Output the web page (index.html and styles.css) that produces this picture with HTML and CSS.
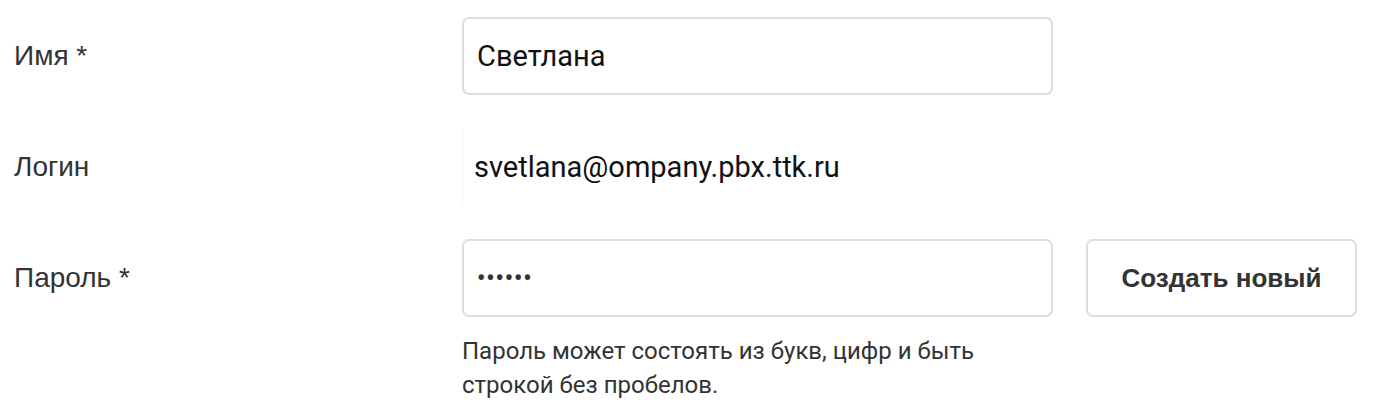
FILE: index.html
```html
<!DOCTYPE html>
<html>
<head>
	<title>Профиль</title>
	<link rel="stylesheet" href="styles.css">
</head>
<body>
	<form class="form">
		<div class="row">
			<span class="label">Имя *</span>
			<div class="field">
				<input class="input" type="text" value="Светлана">
			</div>
		</div>
		<div class="row">
			<span class="label">Логин</span>
			<div class="field">
				<span class="login">svetlana@ompany.pbx.ttk.ru</span>
			</div>
		</div>
		<div class="row">
			<span class="label">Пароль *</span>
			<div class="field">
				<input class="input pass" type="password" value="123456">
				<p class="hint">Пароль может состоять из букв, цифр и быть<br>строкой без пробелов.</p>
			</div>
			<button type="button" class="button">Создать новый</button>
		</div>
	</form>
</body>
</html>
```

FILE: styles.css
```css
body {
	margin: 0;
	font-family: Roboto, "Liberation Sans", sans-serif;
	color: #333;
	background: #fff;
}

.form {
	padding: 17px 0 0 14px;
}

.row {
	display: flex;
	align-items: flex-start;
	margin-bottom: 33px;
}

.label {
	width: 448px;
	height: 78px;
	line-height: 78px;
	font-family: "Liberation Sans", Arial, sans-serif;
	font-size: 28px;
	color: #333;
}

.field {
	width: 591px;
}

.input {
	box-sizing: border-box;
	width: 591px;
	height: 78px;
	margin: 0;
	padding: 0 13px;
	border: 2px solid #ddd;
	border-radius: 7px;
	font-family: Roboto, sans-serif;
	font-size: 29px;
	color: #111;
	outline: none;
}

.pass {
	letter-spacing: 1px;
	font-size: 23px;
	font-weight: bold;
	color: #333;
}

.login {
	display: block;
	height: 78px;
	line-height: 78px;
	font-size: 29px;
	color: #111;
	padding-left: 11px;
	border-left: 1px solid #f3f3f3;
	box-sizing: border-box;
}

.hint {
	margin: 17px 0 0;
	font-size: 24px;
	line-height: 34px;
	color: #333;
}

.button {
	box-sizing: border-box;
	width: 271px;
	height: 78px;
	margin-left: 33px;
	border: 2px solid #ddd;
	border-radius: 7px;
	background: #fff;
	font-family: "Liberation Sans", Arial, sans-serif;
	font-size: 26px;
	font-weight: bold;
	color: #333;
}
```
